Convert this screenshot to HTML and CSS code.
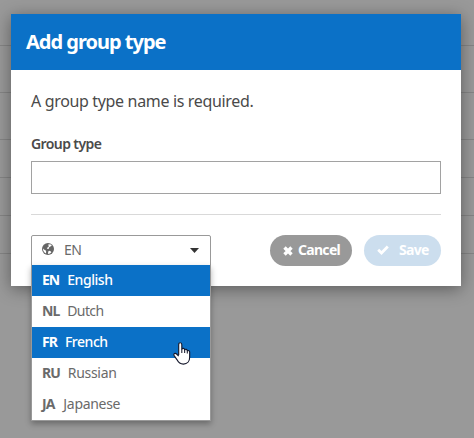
FILE: index.html
```html
<!DOCTYPE html>
<html lang="en">
<head>
<meta charset="utf-8">
<title>Add group type</title>
<link rel="stylesheet" href="styles.css">
</head>
<body>
<div class="page">
  <div class="row row-first"></div><div class="row row-tall"></div><div class="row row-tall"></div>
  <div class="row"></div><div class="row"></div><div class="row"></div>
</div>
<section class="modal">
  <header class="modal-header"><h1>Add group type</h1></header>
  <div class="modal-body">
    <p class="message">A group type name is required.</p>
    <label class="label" for="type">Group type</label>
    <input class="input" id="type" type="text">
    <footer class="footer">
      <div class="select">
        <div class="select-value">
          <svg class="globe" viewBox="0 0 12 12"><circle cx="6" cy="6" r="6" fill="#666"/><path d="M6.6 1.2 8.8 1.6 9.8 2.7 8.3 3.4 7 4.6 6.7 6 5.2 5.8 4.8 5 6 4.2 7 3 6.2 2.2ZM1 5.6 2.4 6.8 3.8 7.6 4.2 8.8 3.9 10.5 2.2 9.3 1.2 7.6ZM6.2 8.4 7.4 7.8 8.6 8.2 9.4 9.2 8 10.5 6 11Z" fill="#fff"/></svg>
          <span>EN</span>
          <svg class="caret" viewBox="0 0 9 5"><path d="M0 0H9L4.5 5Z" fill="#333"/></svg>
        </div>
        <ul class="options">
          <li class="option active"><b>EN</b><span>English</span></li>
          <li class="option"><b>NL</b><span>Dutch</span></li>
          <li class="option active"><b>FR</b><span>French</span></li>
          <li class="option"><b>RU</b><span>Russian</span></li>
          <li class="option"><b>JA</b><span>Japanese</span></li>
        </ul>
      </div>
      <button class="button cancel"><svg class="cross" viewBox="0 0 10 10"><path d="M1.5 1.5 8.5 8.5M8.5 1.5 1.5 8.5" stroke="#fff" stroke-width="3.4"/></svg><span>Cancel</span></button>
      <button class="button save"><svg class="check" viewBox="0 0 12 10"><path d="M1.2 4.8 4.5 8 10.8 1.6" fill="none" stroke="#fff" stroke-width="2.8"/></svg><span>Save</span></button>
    </footer>
  </div>
</section>
<svg class="cursor" viewBox="0 0 19 25"><path d="M6 14V3.2C6 .4 9.3.4 9.3 3.2V8C10 6.6 12.2 6.9 12.3 8.7 13.2 7.6 15 8 15.1 9.6 16.2 8.9 17.6 9.6 17.6 11V16.5C17.6 20.8 15 23.7 11 23.7 7.7 23.7 5.8 22.3 4.3 19.2L1.2 14.7C.2 12.8 2.3 11.6 3.8 13L6 15.2" fill="#fff" stroke="#15182c" stroke-width="1.2" stroke-linejoin="round"/><path d="M9.3 8V12M12.3 8.7V12M15.1 9.6V12.5" stroke="#15182c" stroke-width="1.1"/></svg>
</body>
</html>
```
FILE: styles.css
```css
* { box-sizing: border-box; }
body { margin: 0; width: 474px; height: 438px; overflow: hidden; background: #999; font-family: "Noto Sans", "Open Sans", sans-serif; color: #4a4a4a; }
.row { height: 38px; border-bottom: 1px solid #858585; }
.row-first { height: 46px; }
.row-tall { height: 47px; }
.modal { position: absolute; left: 11px; top: 14px; width: 450px; height: 272px; background: #fff; box-shadow: 0 3px 16px rgba(0,0,0,.4); }
.modal-header { height: 56px; padding-left: 15px; background: #0b71c7; color: #fff; }
h1 { margin: 0; font-size: 20px; line-height: 56px; font-weight: 700; letter-spacing: -1px; white-space: nowrap; }
.modal-body { padding: 0 20px; display: flex; flex-direction: column; }
.message { margin: 19px 0 0; font-size: 16px; line-height: 24px; letter-spacing: -.34px; }
.label { margin-top: 21px; font-size: 14px; line-height: 20px; font-weight: 600; letter-spacing: -.6px; }
.input { margin-top: 7px; width: 410px; height: 33px; border: 1px solid #a2a2a2; background: #fff; padding: 0 10px; }
.footer { display: flex; margin-top: 20px; border-top: 1px solid #d9d9d9; padding-top: 20px; }
.select { position: relative; width: 180px; height: 31px; margin-right: 59px; color: #6a6a6a; font-size: 14px; }
.select-value { height: 31px; border: 1px solid #999; border-radius: 2px 2px 0 0; display: flex; align-items: center; padding: 0 11px 3px 10px; letter-spacing: -.5px; }
.globe { width: 12px; height: 12px; margin-right: 10px; }
.caret { width: 9px; height: 5px; margin: 3px 0 0 auto; }
.options { position: absolute; left: 0; top: 30px; width: 180px; margin: 0; padding: 0; list-style: none; background: #fff; border: 1px solid #999; border-top: 0; box-shadow: 0 3px 6px rgba(0,0,0,.3); }
.option { height: 31px; display: flex; align-items: center; padding: 0 10px 3px; gap: 8px; letter-spacing: -.3px; }
.option:nth-child(2) { letter-spacing: -.6px; }
.option:nth-child(5) { gap: 9px; }
.option b { font-weight: 700; letter-spacing: -1px; }
.active { background: #0b71c7; color: #fff; }
.active span { font-weight: 500; letter-spacing: -.45px; }
.button { height: 31px; border: 0; border-radius: 16px; display: flex; align-items: center; padding: 0 0 2px; color: #fff; font: 700 14px "Noto Sans", sans-serif; letter-spacing: -.7px; white-space: nowrap; }
.cancel { width: 82px; background: #999; padding-left: 13px; gap: 5px; }
.save { width: 77px; margin-left: 12px; background: #ccdeee; padding-left: 13px; gap: 10px; }
.cross { width: 10px; height: 10px; margin-top: 2px; }
.check { width: 12px; height: 10px; margin-top: 1px; }
.cursor { position: absolute; left: 173px; top: 341px; width: 18px; height: 25px; }
```
